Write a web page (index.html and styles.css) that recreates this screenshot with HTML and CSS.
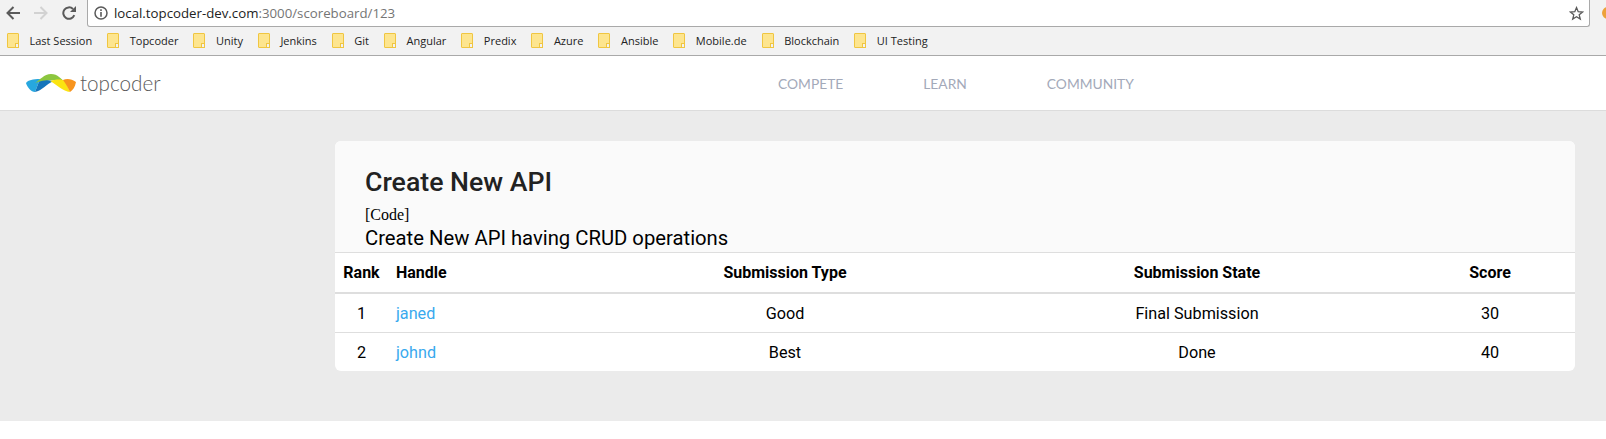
FILE: index.html
```html
<!DOCTYPE html>
<html>
<head>
    <meta charset="UTF-8">
    <meta name="viewport" content="width=device-width, initial-scale=1.0">
    <title>Scoreboard</title>
    <link rel="stylesheet" href="styles.css">
</head>
<body>
    <div class="toolbar">
        <svg class="tool-icon" width="14" height="14" viewBox="0 0 14 14"><path d="M14 7H2M7.500 1 1.500 7l6 6" fill="none" stroke="#5a5a5a" stroke-width="2"/></svg>
        <svg class="tool-icon" width="14" height="14" viewBox="0 0 14 14"><path d="M0 7h12M6.500 1l6 6-6 6" fill="none" stroke="#d2d2d2" stroke-width="2"/></svg>
        <svg class="tool-icon" width="14" height="14" viewBox="0 0 14 14"><path d="M12.300 9.200A5.700 5.700 0 1 1 11 3" fill="none" stroke="#5a5a5a" stroke-width="2"/><path d="M8 6h6V0z" fill="#5a5a5a"/></svg>
        <div class="omnibox">
            <svg class="info-icon" width="14" height="14" viewBox="0 0 14 14"><circle cx="7" cy="7" r="6" fill="none" stroke="#5a5a5a" stroke-width="1.500"/><path d="M6.200 3.300h1.600v1.600H6.200zM6.200 6h1.600v4.700H6.200z" fill="#5a5a5a"/></svg>
            <span class="url"><span class="url-host">local.topcoder-dev.com</span>:3000/scoreboard/123</span>
            <svg class="star-icon" width="15" height="15" viewBox="0 0 15 15"><path d="M7.500 1.600 9.200 5.700l4.400.3-3.400 2.800 1.100 4.300-3.800-2.300-3.800 2.300 1.100-4.300L1.400 6l4.400-.3z" fill="none" stroke="#5a5a5a" stroke-width="1.300"/></svg>
        </div>
        <div class="ext-icon"></div>
    </div>

    <div class="bookmarks">
        <div class="bookmark"><span class="folder"></span>Last Session</div>
        <div class="bookmark"><span class="folder"></span>Topcoder</div>
        <div class="bookmark"><span class="folder"></span>Unity</div>
        <div class="bookmark"><span class="folder"></span>Jenkins</div>
        <div class="bookmark"><span class="folder"></span>Git</div>
        <div class="bookmark"><span class="folder"></span>Angular</div>
        <div class="bookmark"><span class="folder"></span>Predix</div>
        <div class="bookmark"><span class="folder"></span>Azure</div>
        <div class="bookmark"><span class="folder"></span>Ansible</div>
        <div class="bookmark"><span class="folder"></span>Mobile.de</div>
        <div class="bookmark"><span class="folder"></span>Blockchain</div>
        <div class="bookmark"><span class="folder"></span>UI Testing</div>
    </div>

    <div class="site-header">
        <div class="logo">
            <svg width="50" height="20" viewBox="0 0 50 20">
                <path d="M0 10C2 7 7 6 14 6L9 19C5 19 1 14 0 10Z" fill="#27a7df"/>
                <path d="M9 19C16 18 20 11 28 8L14 6Z" fill="#1574bb"/>
                <path d="M9 10C14 7 18 1 25 1 32 1 35 6 39 9 34 7 30 7 25 7 19 7 14 8 9 10Z" fill="#8cc63f"/>
                <path d="M24 8C30 6 36 6 39 8L44 19C37 18 31 12 24 8Z" fill="#fbe411"/>
                <path d="M37 7C41 5 46 6 50 9 49 14 47 17 44 19 42 15 40 11 37 7Z" fill="#f7941e"/>
            </svg>
            <span class="logo-text">topcoder</span>
        </div>
        <nav class="main-nav">
            <a>COMPETE</a>
            <a>LEARN</a>
            <a>COMMUNITY</a>
        </nav>
    </div>

    <div class="content">
        <div class="card">
            <div class="card-head">
                <h1>Create New API</h1>
                <div class="challenge-type">[Code]</div>
                <p>Create New API having CRUD operations</p>
            </div>
            <table class="scores">
                <thead>
                    <tr>
                        <th class="col-rank">Rank</th>
                        <th class="col-handle">Handle</th>
                        <th class="col-type">Submission Type</th>
                        <th class="col-state">Submission State</th>
                        <th class="col-score">Score</th>
                    </tr>
                </thead>
                <tbody>
                    <tr>
                        <td>1</td>
                        <td class="col-handle"><a>janed</a></td>
                        <td>Good</td>
                        <td>Final Submission</td>
                        <td>30</td>
                    </tr>
                    <tr>
                        <td>2</td>
                        <td class="col-handle"><a>johnd</a></td>
                        <td>Best</td>
                        <td>Done</td>
                        <td>40</td>
                    </tr>
                </tbody>
            </table>
        </div>
    </div>
</body>
</html>
```

FILE: styles.css
```css
body {
    margin: 0;
    padding: 0;
    background-color: #fff;
    font-family: Roboto, "Liberation Sans", sans-serif;
    color: #000;
    overflow: hidden;
}

/* browser chrome */
.toolbar {
    display: flex;
    align-items: flex-start;
    height: 27px;
    padding-left: 6px;
    background-color: #f2f2f2;
    box-sizing: border-box;
}

.tool-icon {
    margin: 6px 14px 0 0;
    flex: none;
}

.omnibox {
    display: flex;
    align-items: center;
    flex: none;
    width: 1503px;
    height: 27px;
    margin-left: -3px;
    padding: 0 5px 0 6px;
    box-sizing: border-box;
    background-color: #fff;
    border: 1px solid #a9a9a9;
    border-top: none;
    border-radius: 0 0 3px 3px;
}

.info-icon {
    flex: none;
    margin-right: 6px;
}

.url {
    flex: 1;
    font-family: "Open Sans", sans-serif;
    font-size: 13.250px;
    color: #757575;
}

.url-host {
    color: #222;
}

.star-icon {
    flex: none;
}

.ext-icon {
    flex: none;
    width: 12px;
    height: 12px;
    margin: 7px 0 0 12px;
    border-radius: 50%;
    background-color: #eda13a;
}

.bookmarks {
    display: flex;
    align-items: center;
    gap: 15px;
    height: 27px;
    padding: 0 0 1px 7px;
    background-color: #f2f2f2;
    border-bottom: 1px solid #a9a9a9;
    font-family: "Open Sans", sans-serif;
    font-size: 11px;
    color: #222;
}

.bookmark {
    display: flex;
    align-items: center;
    white-space: nowrap;
}

.folder {
    position: relative;
    width: 10px;
    height: 13px;
    margin-right: 10.500px;
    background-color: #fde58f;
    border: 1px solid #f0c641;
    border-radius: 1px;
}

.folder::after {
    content: "";
    position: absolute;
    right: -1px;
    bottom: -1px;
    width: 2px;
    height: 3px;
    background-color: #f2f2f2;
    border: 1px solid #f0c641;
}

/* site header */
.site-header {
    display: flex;
    align-items: center;
    height: 54px;
    padding-left: 26px;
    background-color: #fff;
    border-bottom: 1px solid #dcdcdc;
}

.logo {
    display: flex;
    align-items: center;
    width: 752px;
}

.logo-text {
    margin-left: 4px;
    font-family: Lato, sans-serif;
    font-weight: 300;
    font-size: 20.700px;
    color: #5a5a5a;
}

.main-nav {
    display: flex;
    gap: 80px;
    font-family: Lato, sans-serif;
    font-size: 13.800px;
    color: #a3a9b9;
}

/* scoreboard */
.content {
    display: flex;
    justify-content: flex-end;
    padding: 30px 31px 50px;
    background-color: #ebebeb;
}

.card {
    width: 1240px;
    background-color: #fff;
    border-radius: 6px;
    overflow: hidden;
}

.card-head {
    height: 112px;
    padding: 25px 30px 0;
    box-sizing: border-box;
    background-color: #fafafa;
    border-bottom: 1px solid #dedede;
}

.card-head h1 {
    margin: 0;
    font-size: 26.700px;
    font-weight: 500;
    line-height: 33px;
    color: #222;
}

.challenge-type {
    margin-top: 7px;
    font-family: "Liberation Serif", serif;
    font-size: 16px;
    line-height: 18px;
}

.card-head p {
    margin: 2px 0 0;
    font-size: 20.250px;
    line-height: 24px;
}

.scores {
    width: 100%;
    table-layout: fixed;
    border-collapse: collapse;
    font-size: 16.200px;
}

.scores th {
    height: 39px;
    padding: 0;
    font-size: 16px;
    font-weight: 700;
    border-bottom: 2px solid #dedede;
}

.scores td {
    height: 38px;
    padding: 0;
    text-align: center;
    border-bottom: 1px solid #dedede;
}

.scores tr:last-child td {
    border-bottom: none;
}

.scores .col-handle {
    padding-left: 8px;
    text-align: left;
}

.scores a {
    color: #39a9ee;
}

.col-rank { width: 53px; }
.col-handle { width: 185px; }
.col-type { width: 408px; }
.col-state { width: 416px; }
.col-score { width: 170px; }
```
